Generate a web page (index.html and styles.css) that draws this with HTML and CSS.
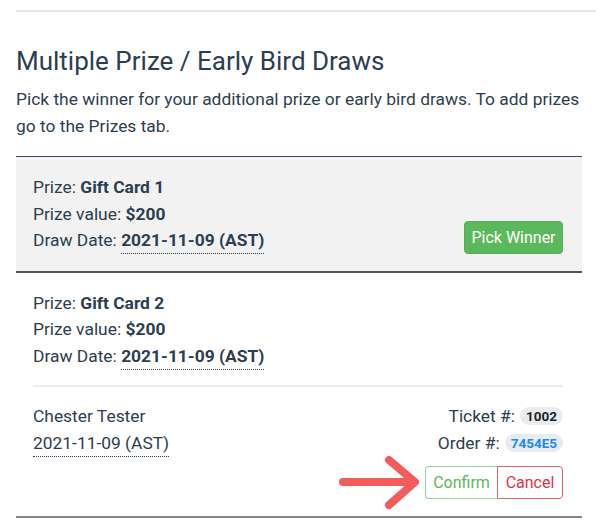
FILE: index.html
```html
<!DOCTYPE html>
<html>
<head>
<meta charset="utf-8">
<link rel="stylesheet" href="styles.css">
</head>
<body>
<div class="page">
  <div class="top-rule"></div>
  <h2 class="title">Multiple Prize / Early Bird Draws</h2>
  <p class="intro">Pick the winner for your additional prize or early bird draws. To add prizes go to the Prizes tab.</p>
  <div class="draws">
    <div class="draw draw-active">
      <div class="draw-row">
        <div class="draw-info">
          <div>Prize: <b>Gift Card 1</b></div>
          <div>Prize value: <b>$200</b></div>
          <div>Draw Date: <b class="dotted">2021-11-09 (AST)</b></div>
        </div>
        <button class="btn-pick">Pick Winner</button>
      </div>
    </div>
    <div class="draw">
      <div class="draw-info">
        <div>Prize: <b>Gift Card 2</b></div>
        <div>Prize value: <b>$200</b></div>
        <div>Draw Date: <b class="dotted">2021-11-09 (AST)</b></div>
      </div>
      <div class="winner">
        <div class="winner-left">
          <div>Chester Tester</div>
          <div><span class="dotted">2021-11-09 (AST)</span></div>
        </div>
        <div class="winner-right">
          <div class="meta">Ticket #: <span class="badge">1002</span></div>
          <div class="meta">Order #: <span class="badge badge-link">7454E5</span></div>
          <div class="actions">
            <svg class="arrow" width="84" height="56" viewBox="0 0 84 56">
              <path d="M4 27 H74 M50 5 L76 27 L50 50" fill="none" stroke="#f45b5b" stroke-width="8" stroke-linecap="round" stroke-linejoin="round"/>
            </svg>
            <div class="btn-group">
              <button class="btn-confirm">Confirm</button>
              <button class="btn-cancel">Cancel</button>
            </div>
          </div>
        </div>
      </div>
    </div>
  </div>
</div>
</body>
</html>
```
FILE: styles.css
```css
html, body {
  margin: 0;
  padding: 0;
  background: #ffffff;
}
body {
  font-family: Roboto, "Liberation Sans", Arial, sans-serif;
  color: #2c3e50;
  font-size: 17.4px;
  line-height: 26.5px;
}
.page {
  padding-left: 16px;
  padding-top: 10px;
}
.top-rule {
  height: 2px;
  background: #e6e6e6;
}
.title {
  margin: 34px 0 0 0;
  font-size: 26px;
  font-weight: 400;
  line-height: 31px;
  width: 566px;
}
.intro {
  margin: 9px 0 0 0;
  width: 566px;
  font-size: 17.4px;
}
.draws {
  margin-top: 17px;
  width: 566px;
  border-top: 1px solid #34495e;
}
.draw {
  padding: 17px 19px 17px 17px;
  border-bottom: 2px solid #4a5563;
}
.draw:last-child {
  border-bottom: 2px solid #80868d;
}
.draw-active {
  background: #f2f2f2;
}
.draw-row {
  display: flex;
  justify-content: space-between;
  align-items: flex-end;
}
.draw-info b {
  font-weight: 700;
}
.dotted {
  border-bottom: 1px dotted #2c3e50;
  padding-bottom: 3px;
}
.btn-pick {
  font-family: inherit;
  font-size: 16px;
  color: #ffffff;
  background: #5cb85c;
  border: 1px solid #53b053;
  border-radius: 4px;
  height: 33px;
  width: 99px;
  padding: 0;
}
.winner {
  margin-top: 16px;
  border-top: 2px solid #ececec;
  padding-top: 16px;
  display: flex;
  justify-content: space-between;
  align-items: flex-start;
}
.winner-right {
  display: flex;
  flex-direction: column;
  align-items: flex-end;
}
.meta {
  display: flex;
  align-items: center;
  gap: 5px;
}
.badge {
  display: inline-block;
  background: #e9ecef;
  border-radius: 9px;
  font-size: 13.5px;
  font-weight: 700;
  line-height: 18px;
  padding: 0 6px;
  color: #222;
}
.badge-link {
  color: #1e88f5;
}
.actions {
  margin-top: 10px;
  display: flex;
  align-items: center;
  position: relative;
}
.arrow {
  position: absolute;
  left: -86px;
  top: -11px;
}
.btn-group {
  display: flex;
}
.btn-group button {
  font-family: inherit;
  font-size: 16px;
  height: 33px;
  background: #ffffff;
  padding: 0;
}
.btn-confirm {
  width: 72px;
  color: #5cb85c;
  border: 1px solid #8fd19e;
  border-right: none;
  border-radius: 4px 0 0 4px;
}
.btn-cancel {
  width: 66px;
  color: #dc3545;
  border: 1px solid #e4606d;
  border-radius: 0 4px 4px 0;
}
```
